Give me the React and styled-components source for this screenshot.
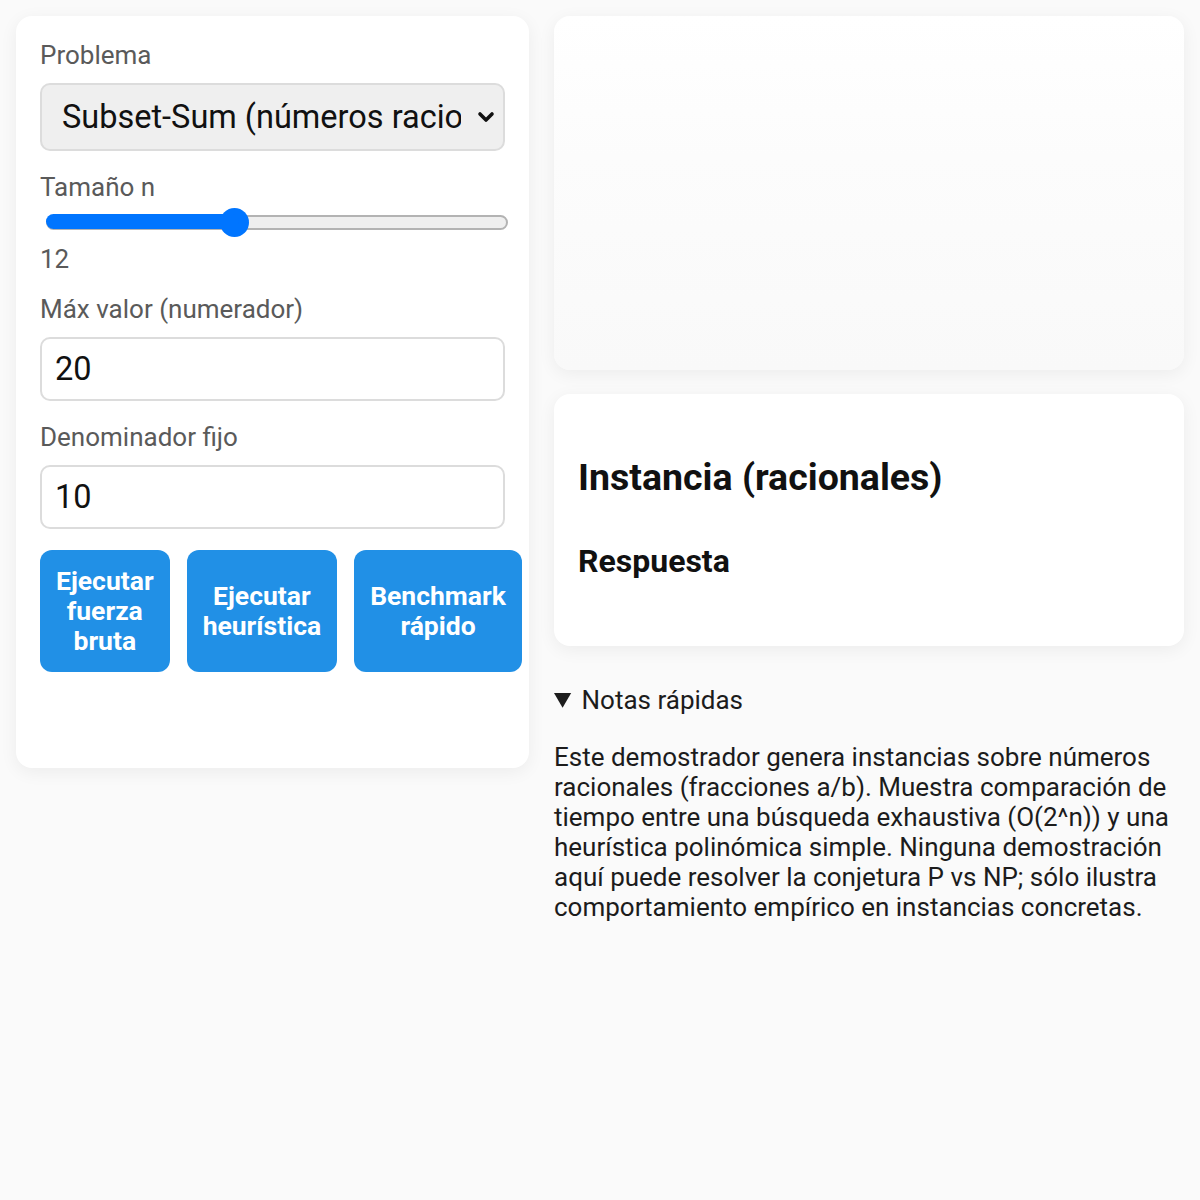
import React, { useState } from 'react';
import styled, { createGlobalStyle } from 'styled-components';
import { ChevronDown } from 'lucide-react';

const Global = createGlobalStyle`
  html, body {
    margin: 0;
    background: #fafafa;
    font-family: Roboto, "Liberation Sans", sans-serif;
    color: #1c1c1c;
  }
`

const Page = styled.div`
  display: grid;
  grid-template-columns: 513px 630px;
  gap: 25px;
  padding: 16px;
  align-items: start;
`

const Panel = styled.section`
  background: #fff;
  border-radius: 16px;
  box-shadow: 0 4px 18px rgba(0, 0, 0, 0.06);
  padding: 24px;
`

const Field = styled.div`
  margin-top: ${props => props.first ? '0' : '21px'};
`

const Label = styled.label`
  display: block;
  font-size: 26px;
  line-height: 30px;
  color: #5a5a5a;
  margin-bottom: ${props => props.tight ? '5px' : '13px'};
`

const SelectWrap = styled.div`
  position: relative;
  width: 465px;
`

const Select = styled.select`
  appearance: none;
  width: 100%;
  height: 68px;
  box-sizing: border-box;
  background: #efefef;
  border: 2px solid #dcdcdc;
  border-radius: 10px;
  padding: 0 42px 0 20px;
  font-family: Roboto, "Liberation Sans", sans-serif;
  font-size: 32.5px;
  color: #111;
  outline: none;
`

const Chevron = styled.span`
  position: absolute;
  right: 7px;
  top: 50%;
  transform: translateY(-50%);
  display: flex;
  pointer-events: none;
  color: #111;
`

const Range = styled.input`
  appearance: none;
  -webkit-appearance: none;
  display: block;
  width: 462px;
  height: 30px;
  margin: 0 0 0 6px;
  background: transparent;

  &::-webkit-slider-runnable-track {
    height: 15px;
    border-radius: 8px;
    box-sizing: border-box;
    border: 2px solid #b3b3b3;
    background: #efefef;
  }
  &::-webkit-slider-thumb {
    -webkit-appearance: none;
    width: 29px;
    height: 29px;
    border-radius: 50%;
    background: #0075ff;
    margin-top: -9px;
    border: none;
  }
`

const Fill = styled.div`
  position: absolute;
  left: 6px;
  top: 7px;
  height: 15px;
  border-radius: 8px;
  background: #0075ff;
  pointer-events: none;
`

const RangeWrap = styled.div`
  position: relative;
`

const Value = styled.div`
  font-size: 26px;
  line-height: 30px;
  color: #5a5a5a;
  margin-top: 7px;
`

const Input = styled.input`
  display: block;
  width: 465px;
  height: 64px;
  box-sizing: border-box;
  border: 2px solid #dcdcdc;
  border-radius: 10px;
  background: #fff;
  padding: 0 13px;
  font-family: Roboto, "Liberation Sans", sans-serif;
  font-size: 32.5px;
  color: #111;
  outline: none;
`

const Actions = styled.div`
  display: flex;
  gap: 17px;
  margin-top: 21px;
`

const Button = styled.button`
  background: #2190e6;
  color: #fff;
  border: none;
  border-radius: 12px;
  padding: 16px;
  font-family: Roboto, "Liberation Sans", sans-serif;
  font-weight: 700;
  font-size: 26.5px;
  line-height: 30px;
  cursor: pointer;
`

const Output = styled.div`
  min-height: 48px;
  margin-top: 24px;
`

const Column = styled.div`
  display: flex;
  flex-direction: column;
  gap: 24px;
`

const Card = styled.section`
  background: #fff;
  border-radius: 16px;
  box-shadow: 0 4px 18px rgba(0, 0, 0, 0.06);
  padding: 24px;
`

const ChartCard = styled(Card)`
  height: 354px;
  box-sizing: border-box;
  background: linear-gradient(180deg, #ffffff 0%, #fcfcfc 40%, #f9f9f9 100%);
`

const Title = styled.h2`
  font-size: 37.5px;
  line-height: 43px;
  font-weight: 700;
  margin: 38px 0 0;
  color: #111;
`

const Subtitle = styled.h3`
  font-size: 32px;
  line-height: 36px;
  font-weight: 700;
  margin: 44px 0 43px;
  color: #111;
`

const Notes = styled.details`
  margin-top: 15px;
  font-size: 26px;
  line-height: 30px;
  color: #1c1c1c;
`

const Summary = styled.summary`
  cursor: pointer;
`

const NoteText = styled.p`
  margin: 27px 0 0;
  font-size: 26px;
  line-height: 30px;
`

export default function App() {
  const [n, setN] = useState(12)
  const min = 4
  const max = 24
  const pct = (n - min) / (max - min)

  return (
    <>
      <Global />
      <Page>
        <Panel>
          <Field first>
            <Label>Problema</Label>
            <SelectWrap>
              <Select defaultValue="subset">
                <option value="subset">Subset-Sum (números racionales)</option>
              </Select>
              <Chevron><ChevronDown size={24} strokeWidth={3.6} /></Chevron>
            </SelectWrap>
          </Field>
          <Field>
            <Label tight>Tamaño n</Label>
            <RangeWrap>
              <Fill style={{ width: `${14 + pct * 448}px` }} />
              <Range type="range" min={min} max={max} value={n} onChange={e => setN(+e.target.value)} />
            </RangeWrap>
            <Value>{n}</Value>
          </Field>
          <Field style={{ marginTop: 20 }}>
            <Label>Máx valor (numerador)</Label>
            <Input type="number" defaultValue="20" />
          </Field>
          <Field>
            <Label>Denominador fijo</Label>
            <Input type="number" defaultValue="10" />
          </Field>
          <Actions>
            <Button>Ejecutar fuerza bruta</Button>
            <Button>Ejecutar heurística</Button>
            <Button>Benchmark rápido</Button>
          </Actions>
          <Output />
        </Panel>

        <Column>
          <ChartCard />
          <Card>
            <Title>Instancia (racionales)</Title>
            <Subtitle>Respuesta</Subtitle>
          </Card>
          <Notes open>
            <Summary>Notas rápidas</Summary>
            <NoteText>
              Este demostrador genera instancias sobre números racionales (fracciones a/b). Muestra comparación de tiempo entre una búsqueda exhaustiva (O(2^n)) y una heurística polinómica simple. Ninguna demostración aquí puede resolver la conjetura P vs NP; sólo ilustra comportamiento empírico en instancias concretas.
            </NoteText>
          </Notes>
        </Column>
      </Page>
    </>
  )
}
